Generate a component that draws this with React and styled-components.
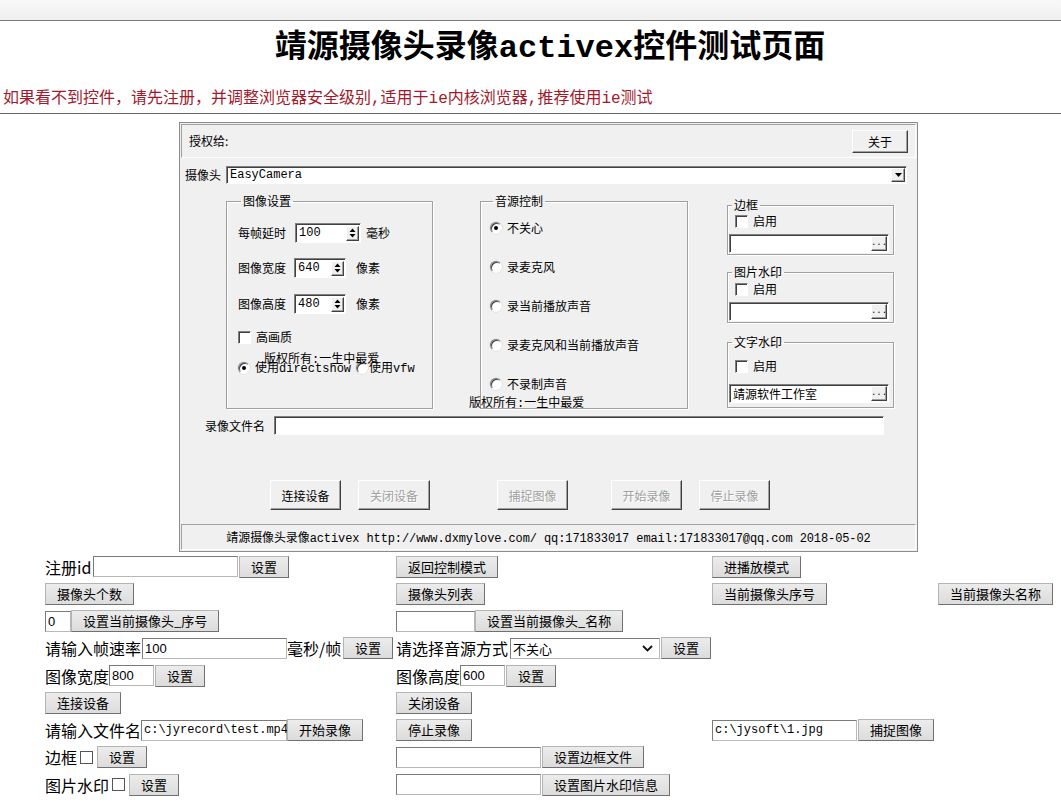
import React from "react";
import styled, { createGlobalStyle } from "styled-components";

const CJK = `"Noto Sans CJK SC", sans-serif`;
const MONO = `"Liberation Mono", "Noto Sans CJK SC", monospace`;

const GlobalStyle = createGlobalStyle`
  html, body {
    margin: 0;
    padding: 0;
    background: #fff;
    overflow: hidden;
  }
  body {
    font-family: ${CJK};
    color: #000;
  }
`;

const Page = styled.div`
  width: 1100px;
`;

const TopStrip = styled.div`
  width: 1061px;
  height: 20px;
  background: linear-gradient(#f8f8f8, #efefef);
  border-bottom: 1px solid #7c7c7c;
`;

const Title = styled.h1`
  margin: 0;
  padding-top: 7px;
  height: 42px;
  line-height: 42px;
  text-align: center;
  font-family: "Liberation Mono", "Noto Sans CJK SC", serif;
  font-size: 32px;
  font-weight: bold;
  white-space: nowrap;
`;

const Notice = styled.div`
  margin-top: 19px;
  padding-left: 3px;
  height: 20px;
  line-height: 20px;
  font-family: ${MONO};
  font-size: 16px;
  color: #a3192b;
  white-space: nowrap;
`;

const Rule = styled.div`
  width: 1061px;
  margin-top: 4px;
  border-top: 1px solid #666;
`;

/* ---------- activex control ---------- */

const Control = styled.div`
  box-sizing: border-box;
  width: 739px;
  margin: 8px 0 0 179px;
  border: 1px solid #8c8c8c;
  background: #f0f0f0;
  font-family: ${MONO};
  font-size: 12px;
  display: flex;
  flex-direction: column;
`;

const AuthBar = styled.div`
  box-sizing: border-box;
  height: 34px;
  margin: 1px 1px 0;
  border: 1px solid;
  border-color: #a0a0a0 #fff #fff #a0a0a0;
  display: flex;
  align-items: center;
  justify-content: space-between;
  padding: 0 7px;
`;

const Text = styled.span`
  flex: none;
  width: ${(p) => (p.$w ? `${p.$w}px` : "auto")};
  margin-left: ${(p) => p.$ml || 0}px;
  font-family: ${CJK};
  font-size: 12px;
  line-height: 14px;
  white-space: nowrap;
`;

const Latin = styled.span`
  font-family: "Liberation Mono", monospace;
`;

const WinButton = styled.button`
  box-sizing: border-box;
  flex: none;
  width: ${(p) => p.$w}px;
  height: ${(p) => p.$h}px;
  margin-left: ${(p) => p.$ml || 0}px;
  padding: 0;
  background: #f0f0f0;
  border: 1px solid;
  border-color: #fff #404040 #404040 #fff;
  box-shadow: inset -1px -1px #a0a0a0;
  font-family: ${CJK};
  font-size: 12px;
  color: ${(p) => (p.disabled ? "#a0a0a0" : "#000")};
  text-shadow: ${(p) => (p.disabled ? "1px 1px #fff" : "none")};
`;

const Sunken = styled.div`
  box-sizing: border-box;
  flex: none;
  width: ${(p) => p.$w}px;
  height: ${(p) => p.$h || 19}px;
  margin-left: ${(p) => p.$ml || 0}px;
  background: #fff;
  border: 1px solid;
  border-color: #808080 #fff #fff #808080;
  box-shadow: inset 1px 1px #404040;
  display: flex;
  align-items: center;
  justify-content: space-between;
  padding: 0 1px 0 3px;
  font-family: ${MONO};
  font-size: 12px;
  white-space: nowrap;
`;

const SmallKey = styled.span`
  box-sizing: border-box;
  width: ${(p) => p.$w || 15}px;
  height: ${(p) => p.$h || 15}px;
  background: #f0f0f0;
  border: 1px solid;
  border-color: #fff #404040 #404040 #fff;
  box-shadow: inset -1px -1px #a0a0a0;
  display: flex;
  align-items: center;
  justify-content: center;
  font-size: 9px;
  line-height: 1;
`;

const CameraRow = styled.div`
  display: flex;
  align-items: center;
  height: 18px;
  margin-top: 8px;
  padding-left: 5px;
`;

const Middle = styled.div`
  display: flex;
  align-items: flex-start;
  height: 215px;
  margin-top: 10px;
  padding-left: 46px;
`;

const Group = styled.fieldset`
  box-sizing: border-box;
  flex: none;
  width: ${(p) => p.$w}px;
  height: ${(p) => p.$h}px;
  margin: ${(p) => p.$mt || 0}px 0 0 ${(p) => p.$ml || 0}px;
  padding: 0 0 0 ${(p) => p.$pl || 0}px;
  min-inline-size: 0;
  border: 1px solid #a0a0a0;
  box-shadow: 1px 1px #fff, inset 1px 1px #fff;
  display: flex;
  flex-direction: column;
`;

const Legend = styled.legend`
  margin-left: 3px;
  padding: 0 2px;
  font-family: ${CJK};
  font-size: 12px;
  line-height: 14px;
`;

const SideColumn = styled.div`
  display: flex;
  flex-direction: column;
  margin-left: 39px;
  width: 167px;
`;

const Line = styled.div`
  position: relative;
  display: flex;
  align-items: center;
  height: ${(p) => p.$h || 16}px;
  margin-top: ${(p) => p.$mt || 0}px;
  padding-left: ${(p) => p.$pl || 0}px;
`;

const Radio = styled.span`
  box-sizing: border-box;
  flex: none;
  width: 12px;
  height: 12px;
  margin-left: ${(p) => p.$ml || 0}px;
  border-radius: 50%;
  border: 1px solid;
  border-color: #808080 #fff #fff #808080;
  background: #fff;
  box-shadow: inset 1px 1px #404040, 0 0 0 0.5px #d0d0d0;
  display: flex;
  align-items: center;
  justify-content: center;
  &::after {
    content: "";
    width: 4px;
    height: 4px;
    border-radius: 50%;
    background: ${(p) => (p.$on ? "#000" : "transparent")};
  }
`;

const Box = styled.span`
  box-sizing: border-box;
  flex: none;
  width: 13px;
  height: 13px;
  border: 1px solid;
  border-color: #808080 #fff #fff #808080;
  box-shadow: inset 1px 1px #404040;
  background: #fff;
`;

/* the control's stray copyright labels sit on top of other widgets */
const Stamp = styled.span`
  position: absolute;
  left: ${(p) => p.$x}px;
  top: ${(p) => p.$y}px;
  font-family: ${MONO};
  font-size: 12px;
  line-height: 14px;
  white-space: nowrap;
`;

const FileRow = styled.div`
  display: flex;
  align-items: center;
  height: 19px;
  margin-top: 7px;
  padding-left: 25px;
`;

const ActionRow = styled.div`
  display: flex;
  height: 30px;
  margin-top: 45px;
  padding-left: 90px;
`;

const StatusBar = styled.div`
  box-sizing: border-box;
  height: 26px;
  margin: 14px 1px 1px;
  border: 1px solid;
  border-color: #a0a0a0 #fff #fff #a0a0a0;
  display: flex;
  align-items: center;
  justify-content: center;
  font-family: ${MONO};
  font-size: 12px;
  letter-spacing: -0.1px;
  white-space: nowrap;
`;

const SpinArrows = () => (
  <SmallKey $w={13} $h={15}>
    <svg width="7" height="10" viewBox="0 0 7 10">
      <path d="M3.5 0.5 L6.5 4 L0.5 4 Z M3.5 9.5 L6.5 6 L0.5 6 Z" fill="#000" />
    </svg>
  </SmallKey>
);

const Spinner = ({ w, value }) => (
  <Sunken $w={w} $h={20}>
    <span>{value}</span>
    <SpinArrows />
  </Sunken>
);

const Browse = ({ value }) => (
  <Sunken $w={160} $h={19}>
    <Text>{value}</Text>
    <SmallKey $w={16} $h={15}>...</SmallKey>
  </Sunken>
);

const Toggle = ({ mt }) => (
  <Line $mt={mt} $h={14} $pl={6}>
    <Box />
    <Text $ml={5}>启用</Text>
  </Line>
);

const audioModes = ["不关心", "录麦克风", "录当前播放声音", "录麦克风和当前播放声音", "不录制声音"];

const ActiveX = () => (
  <Control>
    <AuthBar>
      <Text>授权给:</Text>
      <WinButton $w={56} $h={23}>关于</WinButton>
    </AuthBar>

    <CameraRow>
      <Text $w={41}>摄像头</Text>
      <Sunken $w={681} $h={18}>
        <span>EasyCamera</span>
        <SmallKey $w={14} $h={14}>
          <svg width="7" height="4" viewBox="0 0 7 4">
            <path d="M0 0 L7 0 L3.5 4 Z" fill="#000" />
          </svg>
        </SmallKey>
      </Sunken>
    </CameraRow>

    <Middle>
      <Group $w={207} $h={215} $pl={11}>
        <Legend>图像设置</Legend>
        <Line $mt={15} $h={20}>
          <Text $w={57}>每帧延时</Text>
          <Spinner w={66} value="100" />
          <Text $ml={5}>毫秒</Text>
        </Line>
        <Line $mt={15} $h={20}>
          <Text $w={56}>图像宽度</Text>
          <Spinner w={52} value="640" />
          <Text $ml={10}>像素</Text>
        </Line>
        <Line $mt={16} $h={20}>
          <Text $w={56}>图像高度</Text>
          <Spinner w={52} value="480" />
          <Text $ml={10}>像素</Text>
        </Line>
        <Line $mt={15}>
          <Box />
          <Text $ml={5}>高画质</Text>
        </Line>
        <Line $mt={15}>
          <Radio $on />
          <Text $ml={5}>
            使用<Latin>directshow</Latin>
          </Text>
          <Radio $ml={5} />
          <Text $ml={1}>
            使用<Latin>vfw</Latin>
          </Text>
          <Stamp $x={26} $y={-7}>版权所有:一生中最爱</Stamp>
        </Line>
      </Group>

      <Group $w={208} $h={215} $ml={47} $pl={9}>
        <Legend>音源控制</Legend>
        {audioModes.map((mode, i) => (
          <Line key={mode} $mt={i === 0 ? 12 : 23}>
            <Radio $on={i === 0} />
            <Text $ml={5}>{mode}</Text>
            {i === audioModes.length - 1 && (
              <Stamp $x={-21} $y={21}>版权所有:一生中最爱</Stamp>
            )}
          </Line>
        ))}
      </Group>

      <SideColumn>
        <Group $w={167} $h={57} $mt={4} $pl={1}>
          <Legend>边框</Legend>
          <Toggle mt={2} />
          <Line $mt={6} $h={19}>
            <Browse value="" />
          </Line>
        </Group>
        <Group $w={167} $h={58} $mt={10} $pl={1}>
          <Legend>图片水印</Legend>
          <Toggle mt={3} />
          <Line $mt={6} $h={19}>
            <Browse value="" />
          </Line>
        </Group>
        <Group $w={167} $h={73} $mt={12} $pl={1}>
          <Legend>文字水印</Legend>
          <Toggle mt={10} />
          <Line $mt={11} $h={19}>
            <Browse value="靖源软件工作室" />
          </Line>
        </Group>
      </SideColumn>
    </Middle>

    <FileRow>
      <Text $w={69}>录像文件名</Text>
      <Sunken $w={610} $h={19} />
    </FileRow>

    <ActionRow>
      <WinButton $w={71} $h={30}>连接设备</WinButton>
      <WinButton $w={72} $h={30} $ml={17} disabled>关闭设备</WinButton>
      <WinButton $w={71} $h={30} $ml={67} disabled>捕捉图像</WinButton>
      <WinButton $w={71} $h={30} $ml={43} disabled>开始录像</WinButton>
      <WinButton $w={71} $h={30} $ml={17} disabled>停止录像</WinButton>
    </ActionRow>

    <StatusBar>
      靖源摄像头录像activex http://www.dxmylove.com/ qq:171833017 email:171833017@qq.com 2018-05-02
    </StatusBar>
  </Control>
);

/* ---------- test form ---------- */

const Board = styled.div`
  display: grid;
  grid-template-columns: 351px 316px 226px 130px;
  grid-auto-rows: 27.25px;
  padding: 1px 0 0 45px;
`;

const Cell = styled.div`
  display: flex;
  align-items: center;
  white-space: nowrap;
  grid-column: ${(p) => p.$col || "auto"};
`;

const Label = styled.span`
  flex: none;
  width: ${(p) => (p.$w ? `${p.$w}px` : "auto")};
  font-family: ${CJK};
  font-size: 16px;
  line-height: 20px;
`;

const Button = styled.button`
  box-sizing: border-box;
  flex: none;
  height: 22px;
  margin-left: ${(p) => p.$ml || 0}px;
  padding: 0 11px;
  background: linear-gradient(#ececec, #dcdcdc);
  border: 1px solid;
  border-color: #b4b4b4 #707070 #707070 #b4b4b4;
  border-radius: 0;
  font-family: ${CJK};
  font-size: 13px;
  line-height: 20px;
  color: #000;
`;

const Input = styled.div`
  box-sizing: border-box;
  flex: none;
  width: ${(p) => p.$w}px;
  height: 21px;
  padding-left: 2px;
  background: #fff;
  border: 1px solid;
  border-color: #7a7a7a #b8b8b8 #b8b8b8 #7a7a7a;
  display: flex;
  align-items: center;
  font-family: ${(p) => (p.$mono ? MONO : `"Liberation Sans", sans-serif`)};
  font-size: ${(p) => (p.$mono ? 12 : 13)}px;
`;

const Picker = styled.div`
  box-sizing: border-box;
  flex: none;
  width: 150px;
  height: 21px;
  margin-left: 1px;
  padding: 0 6px 0 2px;
  background: #fff;
  border: 1px solid;
  border-color: #7a7a7a #b8b8b8 #b8b8b8 #7a7a7a;
  display: flex;
  align-items: center;
  justify-content: space-between;
  font-family: ${CJK};
  font-size: 13px;
`;

const Tick = styled.span`
  box-sizing: border-box;
  flex: none;
  width: 13px;
  height: 13px;
  margin-left: 3px;
  border: 1px solid #555;
  background: #fff;
`;

const TestForm = () => (
  <Board>
    <Cell>
      <Label $w={48}>注册id</Label>
      <Input $w={145} />
      <Button $ml={1}>设置</Button>
    </Cell>
    <Cell>
      <Button>返回控制模式</Button>
    </Cell>
    <Cell $col="3 / 5">
      <Button>进播放模式</Button>
    </Cell>

    <Cell>
      <Button>摄像头个数</Button>
    </Cell>
    <Cell>
      <Button>摄像头列表</Button>
    </Cell>
    <Cell>
      <Button>当前摄像头序号</Button>
    </Cell>
    <Cell>
      <Button>当前摄像头名称</Button>
    </Cell>

    <Cell>
      <Input $w={26}>0</Input>
      <Button>设置当前摄像头_序号</Button>
    </Cell>
    <Cell $col="2 / 5">
      <Input $w={79} />
      <Button>设置当前摄像头_名称</Button>
    </Cell>

    <Cell>
      <Label $w={97}>请输入帧速率</Label>
      <Input $w={145}>100</Input>
      <Label $w={56}>毫秒/帧</Label>
      <Button>设置</Button>
    </Cell>
    <Cell $col="2 / 5">
      <Label $w={113}>请选择音源方式</Label>
      <Picker>
        <span>不关心</span>
        <svg width="11" height="7" viewBox="0 0 11 7">
          <path d="M1 1 L5.5 5.5 L10 1" fill="none" stroke="#111" strokeWidth="1.8" />
        </svg>
      </Picker>
      <Button $ml={1}>设置</Button>
    </Cell>

    <Cell>
      <Label $w={64}>图像宽度</Label>
      <Input $w={45}>800</Input>
      <Button $ml={1}>设置</Button>
    </Cell>
    <Cell $col="2 / 5">
      <Label $w={64}>图像高度</Label>
      <Input $w={45}>600</Input>
      <Button $ml={1}>设置</Button>
    </Cell>

    <Cell>
      <Button>连接设备</Button>
    </Cell>
    <Cell $col="2 / 5">
      <Button>关闭设备</Button>
    </Cell>

    <Cell>
      <Label $w={96}>请输入文件名</Label>
      <Input $w={146} $mono>c:\jyrecord\test.mp4</Input>
      <Button>开始录像</Button>
    </Cell>
    <Cell>
      <Button>停止录像</Button>
    </Cell>
    <Cell $col="3 / 5">
      <Input $w={145} $mono>c:\jysoft\1.jpg</Input>
      <Button $ml={1}>捕捉图像</Button>
    </Cell>

    <Cell>
      <Label $w={32}>边框</Label>
      <Tick />
      <Button $ml={4}>设置</Button>
    </Cell>
    <Cell $col="2 / 5">
      <Input $w={145} />
      <Button $ml={1}>设置边框文件</Button>
    </Cell>

    <Cell>
      <Label $w={64}>图片水印</Label>
      <Tick />
      <Button $ml={4}>设置</Button>
    </Cell>
    <Cell $col="2 / 5">
      <Input $w={145} />
      <Button $ml={1}>设置图片水印信息</Button>
    </Cell>
  </Board>
);

export default function App() {
  return (
    <>
      <GlobalStyle />
      <Page>
        <TopStrip />
        <Title>靖源摄像头录像activex控件测试页面</Title>
        <Notice>如果看不到控件，请先注册，并调整浏览器安全级别,适用于ie内核浏览器,推荐使用ie测试</Notice>
        <Rule />
        <ActiveX />
        <TestForm />
      </Page>
    </>
  );
}
